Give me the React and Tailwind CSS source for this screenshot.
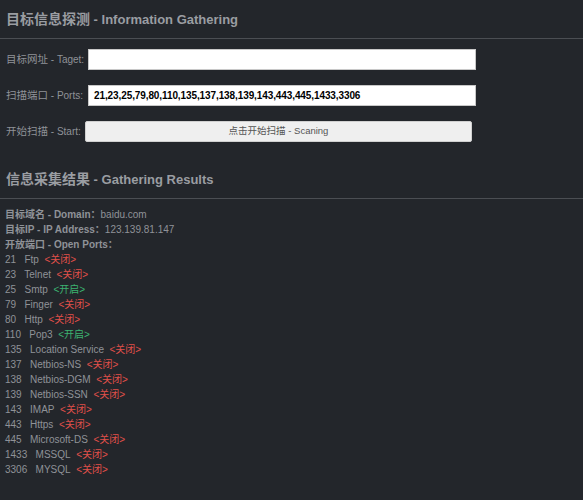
import React from 'react';

const ports = [
    ['21', 'Ftp', false],
    ['23', 'Telnet', false],
    ['25', 'Smtp', true],
    ['79', 'Finger', false],
    ['80', 'Http', false],
    ['110', 'Pop3', true],
    ['135', 'Location Service', false],
    ['137', 'Netbios-NS', false],
    ['138', 'Netbios-DGM', false],
    ['139', 'Netbios-SSN', false],
    ['143', 'IMAP', false],
    ['443', 'Https', false],
    ['445', 'Microsoft-DS', false],
    ['1433', 'MSSQL', false],
    ['3306', 'MYSQL', false],
];

const font = { fontFamily: '"Liberation Sans", "Noto Sans CJK SC", sans-serif' };

const Label = ({ cn, en, w }) => (
    <span className={`${w} shrink-0 whitespace-nowrap text-[10.5px]`}>
        {cn}<span className="text-[10px]"> - {en}:</span>
    </span>
);

export default function App() {
    return (
        <div className="h-[500px] w-[583px] overflow-hidden bg-[#23262b] text-[#8f9298]" style={font}>
            <div className="px-[6px] pt-[10px]">
                <h2 className="whitespace-nowrap text-[14px] font-bold leading-[18px] text-[#9a9da2]">
                    目标信息探测<span className="text-[13px]"> - Information Gathering</span>
                </h2>
            </div>
            <div className="mt-[9px] h-px bg-[#4b4e53]" />

            <div className="flex flex-col gap-[15px] px-[6px] pt-[10px]">
                <div className="flex items-center">
                    <Label cn="目标网址" en="Taget" w="w-[82px]" />
                    <div className="h-[21px] w-[388px] border border-[#c8c8c8] bg-white" />
                </div>
                <div className="flex items-center">
                    <Label cn="扫描端口" en="Ports" w="w-[82px]" />
                    <div className="flex h-[21px] w-[388px] items-center border border-[#c8c8c8] bg-white px-[5px] text-[10px] font-bold tracking-[-0.1px] text-black">
                        21,23,25,79,80,110,135,137,138,139,143,443,445,1433,3306
                    </div>
                </div>
                <div className="flex items-center">
                    <Label cn="开始扫描" en="Start" w="w-[79px]" />
                    <div className="flex h-[21px] w-[387px] items-center justify-center rounded-[2px] border border-[#d0d0d0] bg-[#efefef] text-[9.5px] text-[#555]">
                        点击开始扫描 - Scaning
                    </div>
                </div>
            </div>

            <div className="px-[6px] pt-[28px]">
                <h2 className="whitespace-nowrap text-[14px] font-bold leading-[18px] text-[#9a9da2]">
                    信息采集结果<span className="text-[13px]"> - Gathering Results</span>
                </h2>
            </div>
            <div className="mt-[9px] h-px bg-[#4b4e53]" />

            <div className="px-[5px] pt-[8px] text-[10px] leading-[15px]">
                <div><span className="font-bold">目标域名 - Domain：</span>baidu.com</div>
                <div><span className="font-bold">目标IP - IP Address：</span>123.139.81.147</div>
                <div className="font-bold">开放端口 - Open Ports：</div>
                {ports.map(([port, name, open]) => (
                    <div key={port} className="whitespace-nowrap">
                        {port}&nbsp;&nbsp; {name}&nbsp;&nbsp;
                        {open ? (
                            <span className="text-[#3cb371]">&lt;开启&gt;</span>
                        ) : (
                            <span className="text-[#e0504a]">&lt;关闭&gt;</span>
                        )}
                    </div>
                ))}
            </div>
        </div>
    );
}
